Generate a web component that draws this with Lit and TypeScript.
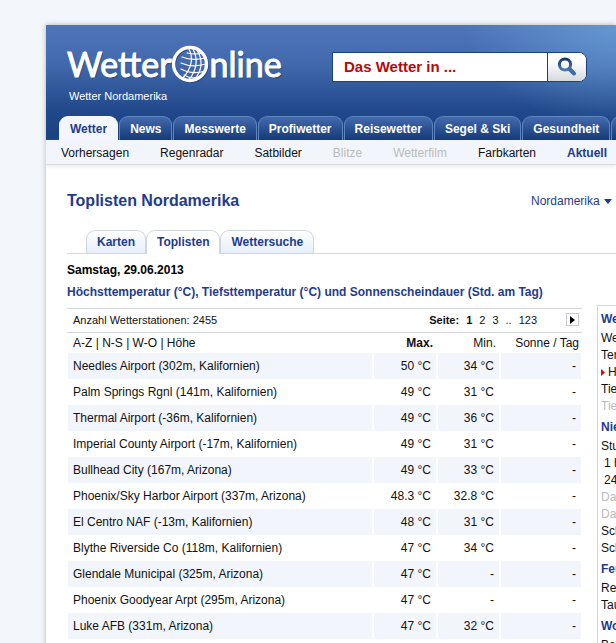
import { LitElement, html, css, svg } from "lit";
import { customElement } from "lit/decorators.js";
import { classMap } from "lit/directives/class-map.js";

type Station = [string, string, string, string];

const MAIN_TABS = ["Wetter", "News", "Messwerte", "Profiwetter", "Reisewetter", "Segel & Ski", "Gesundheit", "Reports"];

const SUB_LINKS: { label: string; kind?: string }[] = [
  { label: "Vorhersagen" },
  { label: "Regenradar" },
  { label: "Satbilder" },
  { label: "Blitze", kind: "off" },
  { label: "Wetterfilm", kind: "off" },
  { label: "Farbkarten" },
  { label: "Aktuell", kind: "current" },
];

const STATIONS: Station[] = [
  ["Needles Airport (302m, Kalifornien)", "50 °C", "34 °C", "-"],
  ["Palm Springs Rgnl (141m, Kalifornien)", "49 °C", "31 °C", "-"],
  ["Thermal Airport (-36m, Kalifornien)", "49 °C", "36 °C", "-"],
  ["Imperial County Airport (-17m, Kalifornien)", "49 °C", "31 °C", "-"],
  ["Bullhead City (167m, Arizona)", "49 °C", "33 °C", "-"],
  ["Phoenix/Sky Harbor Airport (337m, Arizona)", "48.3 °C", "32.8 °C", "-"],
  ["El Centro NAF (-13m, Kalifornien)", "48 °C", "31 °C", "-"],
  ["Blythe Riverside Co (118m, Kalifornien)", "47 °C", "34 °C", "-"],
  ["Glendale Municipal (325m, Arizona)", "47 °C", "-", "-"],
  ["Phoenix Goodyear Arpt (295m, Arizona)", "47 °C", "-", "-"],
  ["Luke AFB (331m, Arizona)", "47 °C", "32 °C", "-"],
];

const SIDE_GROUPS: { title: string; items: { label: string; kind?: string }[] }[] = [
  {
    title: "Wetter",
    items: [
      { label: "Wetter" },
      { label: "Temperatur" },
      { label: "Höchstwerte", kind: "marked" },
      { label: "Tiefstwerte" },
      { label: "Tiefst am Boden", kind: "off" },
    ],
  },
  {
    title: "Niederschlag",
    items: [
      { label: "Stunden" },
      { label: "1 h", kind: "indent" },
      { label: "24 h", kind: "indent" },
      { label: "Dauer", kind: "off" },
      { label: "Dauer", kind: "off" },
      { label: "Schnee" },
      { label: "Schnee" },
    ],
  },
  { title: "Feuchte", items: [{ label: "Relative" }, { label: "Taupunkt" }] },
  { title: "Wolken", items: [{ label: "Bedeckung" }] },
];

const globe = svg`
  <circle cx="19" cy="20" r="16.5" fill="none" stroke="#173a72" stroke-width="3" opacity="0.6"></circle>
  <g fill="none" stroke="#fff" stroke-linecap="round">
    <g stroke-width="1.2">
      <path d="M15 8Q24 10 31 8"></path>
      <path d="M10 12Q20 16 33 13"></path>
      <path d="M9 18Q20 23 34 19"></path>
      <path d="M9 24Q20 30 33 26"></path>
      <path d="M12 30Q20 35 29 31"></path>
      <path d="M17 4Q24 18 11 33"></path>
      <path d="M21 4Q29 19 17 35"></path>
      <path d="M25 5Q34 20 23 34"></path>
    </g>
    <circle cx="18" cy="19" r="16.5" stroke-width="3.4"></circle>
  </g>`;

@customElement("app-root")
export class AppRoot extends LitElement {
  static styles = css`
    :host {
      display: block;
      height: 100vh;
      overflow: hidden;
      box-sizing: border-box;
      padding: 25px 0 0 46px;
      background: #f3f7fb;
      color: #111;
      font: 12px/16px "Liberation Sans", Arial, sans-serif;
    }
    *, *::before, *::after { box-sizing: border-box; }
    a { color: inherit; text-decoration: none; white-space: nowrap; }
    h1, h2, h3, p, ul { margin: 0; padding: 0; list-style: none; }
    button, input, select { font: inherit; margin: 0; border: 0; border-radius: 0; }
    .page {
      min-height: 100%;
      background: #fff;
      box-shadow: 0 0 5px #aab0b8;
    }
    .header {
      display: flex;
      flex-direction: column;
      height: 115px;
      overflow: hidden;
      background:
        radial-gradient(ellipse 150px 100px at 100% 0, rgba(110, 165, 220, 0.7), transparent),
        linear-gradient(#4f76ba, #4268ac 35%, #20488a 75%, #1b4280);
    }
    .top { display: flex; flex: 1; padding: 20px 29px 0 21px; }
    .brand { flex: none; color: #fff; }
    .logo {
      display: flex;
      align-items: flex-end;
      height: 38px;
      font: 34px/38px Lato, sans-serif;
      -webkit-text-stroke: 1px #fff;
      text-shadow: 1px 1px 1px #173a72;
    }
    .globe { width: 38px; height: 38px; flex: none; }
    .claim { margin-top: 6px; padding-left: 2px; font-size: 11px; line-height: 14px; }
    .search {
      display: flex;
      width: 255px;
      height: 30px;
      margin: 7px 0 0 auto;
      border: 1px solid #17427c;
      border-radius: 0 8px 8px 0;
      overflow: hidden;
      background: #fff;
    }
    .query {
      flex: 1;
      min-width: 0;
      padding: 0 11px;
      background: #fff;
      color: #b50a0a;
      font-size: 15px;
      font-weight: bold;
      outline: 0;
    }
    .go {
      width: 39px;
      padding: 0;
      border-left: 1px solid #17427c;
      background: linear-gradient(#fff 30%, #d5dade);
    }
    .go svg { display: block; margin: 0 auto; }
    .tabs { display: flex; gap: 1px; padding-left: 13px; }
    .tab {
      flex: none;
      height: 24px;
      padding: 0 10px;
      border: 1px solid #5c86c0;
      border-bottom: 0;
      border-radius: 9px 9px 0 0;
      background: linear-gradient(#4469ae, #143a78);
      color: #fff;
      font-weight: bold;
      line-height: 24px;
    }
    .tab.active { background: #f3f6fc; border-color: #f3f6fc; color: #1f3c8c; }
    .subnav {
      display: flex;
      gap: 31px;
      height: 25px;
      padding-left: 15px;
      overflow: hidden;
      background: #f2f5fb;
      border-bottom: 1px solid #d9dbde;
      line-height: 27px;
      box-shadow: 0 2px 3px #ececec;
    }
    .off { color: #bbb; }
    .current { color: #1f3c8c; font-weight: bold; }
    .head {
      display: flex;
      justify-content: space-between;
      align-items: center;
      padding: 25px 4px 0 21px;
      color: #1f3c8c;
    }
    .title { font-size: 16px; line-height: 22px; }
    .region { display: flex; align-items: center; gap: 4px; }
    .pick { appearance: none; padding: 0; background: none; color: inherit; }
    .views {
      display: flex;
      margin: 18px 0 0 21px;
      padding-left: 19px;
      border-bottom: 1px solid #d4d7dc;
    }
    .view {
      height: 23px;
      padding: 0 10px;
      border: 1px solid #d0d6de;
      border-bottom: 0;
      border-radius: 9px 9px 0 0;
      background: linear-gradient(#fff, #e6effa);
      color: #1f3c8c;
      font-weight: bold;
      line-height: 22px;
    }
    .view.active { height: 24px; margin-bottom: -1px; background: #fff; }
    .body { display: flex; gap: 15px; padding-left: 21px; }
    .main { flex: 1; min-width: 0; padding-top: 8px; }
    .date { font-weight: bold; color: #000; }
    .topic { margin: 6px 0 8px; font-size: 12px; line-height: 16px; color: #1f3c8c; white-space: nowrap; }
    .pager {
      display: flex;
      align-items: center;
      height: 25px;
      padding: 0 3px 2px 6px;
      border: solid #d4d7dc;
      border-width: 1px 0;
      font-size: 11px;
    }
    .pages { display: flex; gap: 7px; margin-left: auto; }
    .next {
      display: grid;
      place-items: center;
      width: 13px;
      height: 13px;
      margin-left: 29px;
      padding: 0;
      border: 1px solid #ccc;
      background: #fff;
    }
    .list { width: 100%; table-layout: fixed; border-collapse: separate; border-spacing: 0; }
    .list th { height: 20px; padding: 0 5px; font-weight: normal; text-align: right; white-space: nowrap; }
    .list th:first-child { padding-left: 6px; text-align: left; }
    .list th:last-child { padding-right: 3px; }
    .list th.sorted { font-weight: bold; }
    .list td {
      height: 26px;
      padding: 0 5px;
      border-right: 2px solid #fff;
      background-clip: padding-box;
      text-align: right;
      white-space: nowrap;
    }
    .list td:first-child { border-left: 1px solid #fff; text-align: left; }
    .list td:last-child { border-right-width: 1px; }
    .list tr:nth-child(odd) td { background-color: #f2f5fb; }
    .col-max { width: 64px; }
    .col-min { width: 63px; }
    .col-sun { width: 81px; }
    .side {
      flex: 0 0 19px;
      margin-top: 51px;
      padding: 1px 0 0 3px;
      border: solid #d4d7dc;
      border-width: 1px 0 0 1px;
      overflow: hidden;
      white-space: nowrap;
      line-height: 17px;
    }
    .side-title { padding: 4px 0 2px; font-size: 12px; line-height: 17px; color: #1f3c8c; }
    .marked { display: flex; align-items: center; gap: 3px; }
    .marked svg { flex: none; }
    .indent { padding-left: 3px; }
  `;

  render() {
    return html`
      <div class="page">
        <header class="header">
          <div class="top">
            <a class="brand" href="#">
              <div class="logo">
                <span>Wetter</span>
                <svg class="globe" viewBox="0 0 38 38" aria-hidden="true">${globe}</svg>
                <span>nline</span>
              </div>
              <p class="claim">Wetter Nordamerika</p>
            </a>
            <form class="search" @submit=${(e: Event) => e.preventDefault()}>
              <input class="query" type="text" aria-label="Ort suchen" .value=${"Das Wetter in ..."} />
              <button class="go" type="submit" aria-label="Suchen">
                <svg width="20" height="20" viewBox="0 0 20 20">
                  <defs>
                    <linearGradient id="lens" x1="0" y1="0" x2="0" y2="1">
                      <stop offset="0" stop-color="#17386c"></stop>
                      <stop offset="1" stop-color="#4b7db4"></stop>
                    </linearGradient>
                  </defs>
                  <circle cx="8" cy="7.5" r="5.6" fill="none" stroke="url(#lens)" stroke-width="3"></circle>
                  <path d="M12.5 12L17 16.5" stroke="#3c6ea8" stroke-width="4" stroke-linecap="round"></path>
                </svg>
              </button>
            </form>
          </div>
          <nav class="tabs">
            ${MAIN_TABS.map((t, i) => html`<a href="#" class=${classMap({ tab: true, active: i === 0 })}>${t}</a>`)}
          </nav>
        </header>
        <nav class="subnav">
          ${SUB_LINKS.map((l) => html`<a href="#" class=${l.kind ?? ""}>${l.label}</a>`)}
        </nav>
        <div class="head">
          <h1 class="title">Toplisten Nordamerika</h1>
          <label class="region">
            <select class="pick" aria-label="Region"><option>Nordamerika</option></select>
            <svg width="8" height="5" viewBox="0 0 8 5"><path d="M0 0H8L4 5Z" fill="#1f3c8c"></path></svg>
          </label>
        </div>
        <nav class="views">
          ${["Karten", "Toplisten", "Wettersuche"].map(
            (v, i) => html`<a href="#" class=${classMap({ view: true, active: i === 1 })}>${v}</a>`
          )}
        </nav>
        <div class="body">
          <main class="main">
            <p class="date">Samstag, 29.06.2013</p>
            <h2 class="topic">Höchsttemperatur (°C), Tiefsttemperatur (°C) und Sonnenscheindauer (Std. am Tag)</h2>
            <div class="pager">
              <span>Anzahl Wetterstationen: 2455</span>
              <div class="pages">
                <b>Seite:</b><b>1</b><a href="#">2</a><a href="#">3</a><span>..</span><a href="#">123</a>
              </div>
              <button class="next" aria-label="Nächste Seite">
                <svg width="5" height="8" viewBox="0 0 5 8"><path d="M0 0L5 4L0 8Z"></path></svg>
              </button>
            </div>
            <table class="list">
              <colgroup>
                <col />
                <col class="col-max" />
                <col class="col-min" />
                <col class="col-sun" />
              </colgroup>
              <thead>
                <tr>
                  <th><a href="#">A-Z</a> | <a href="#">N-S</a> | <a href="#">W-O</a> | <a href="#">Höhe</a></th>
                  <th class="sorted">Max.</th>
                  <th>Min.</th>
                  <th>Sonne / Tag</th>
                </tr>
              </thead>
              <tbody>
                ${STATIONS.map((row) => html`<tr>${row.map((c) => html`<td>${c}</td>`)}</tr>`)}
              </tbody>
            </table>
          </main>
          <aside class="side">
            ${SIDE_GROUPS.map(
              (g) => html`
                <h3 class="side-title">${g.title}</h3>
                <ul>
                  ${g.items.map(
                    (i) => html`<li class=${i.kind ?? ""}>
                      ${i.kind === "marked"
                        ? html`<svg width="4" height="7" viewBox="0 0 4 7"><path d="M0 0L4 3.5L0 7Z" fill="#d01010"></path></svg>`
                        : ""}<a href="#">${i.label}</a>
                    </li>`
                  )}
                </ul>
              `
            )}
          </aside>
        </div>
      </div>
    `;
  }
}
